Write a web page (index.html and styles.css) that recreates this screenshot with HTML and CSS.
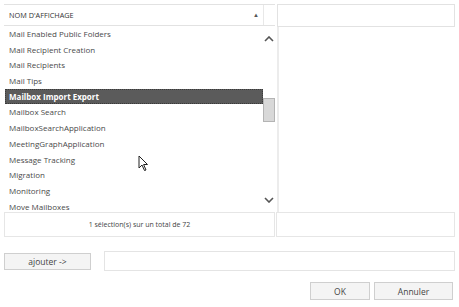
FILE: index.html
```html
<!DOCTYPE html>
<html lang="fr">
<head>
    <meta charset="UTF-8">
    <title>Sélectionner un rôle</title>
    <link rel="stylesheet" href="styles.css">
</head>
<body>
    <div class="dialog">
        <!-- listes -->
        <div class="lists">
            <div class="panel">
                <div class="head">
                    <span class="label">NOM D'AFFICHAGE</span>
                    <span class="sort">▲</span>
                    <span class="gutter"></span>
                </div>
                <div class="body">
                    <ul class="rows">
                        <li>Mail Enabled Public Folders</li>
                        <li>Mail Recipient Creation</li>
                        <li>Mail Recipients</li>
                        <li>Mail Tips</li>
                        <li class="selected">Mailbox Import Export</li>
                        <li>Mailbox Search</li>
                        <li>MailboxSearchApplication</li>
                        <li>MeetingGraphApplication</li>
                        <li>Message Tracking</li>
                        <li>Migration</li>
                        <li>Monitoring</li>
                        <li>Move Mailboxes</li>
                    </ul>
                    <div class="scrollbar">
                        <svg class="chev" width="10" height="6" viewBox="0 0 10 6"><path d="M1 5 L5 1 L9 5" fill="none" stroke="#555" stroke-width="1.6"/></svg>
                        <div class="track"><div class="thumb"></div></div>
                        <svg class="chev" width="10" height="6" viewBox="0 0 10 6"><path d="M1 1 L5 5 L9 1" fill="none" stroke="#555" stroke-width="1.6"/></svg>
                    </div>
                </div>
                <div class="foot">1 sélection(s) sur un total de 72</div>
            </div>
            <div class="panel side">
                <div class="head"></div>
                <div class="body"></div>
                <div class="foot"></div>
            </div>
        </div>

        <div class="add-row">
            <button class="btn add">ajouter -&gt;</button>
            <div class="field"></div>
        </div>

        <div class="actions">
            <button class="btn ok">OK</button>
            <button class="btn cancel">Annuler</button>
        </div>

        <!-- curseur -->
        <svg class="cursor" width="11" height="17" viewBox="0 0 11 17"><path d="M1 1 L1 13 L4 10 L6.5 15.5 L8 15 L5.6 9.5 L9.5 9.5 Z" fill="#fff" stroke="#222" stroke-width="1"/></svg>
    </div>
</body>
</html>
```

FILE: styles.css
```css
* {
    margin: 0;
    padding: 0;
    box-sizing: border-box;
}

body {
    font-family: "Open Sans", "Noto Sans", sans-serif;
    background: #fff;
    color: #444;
    width: 459px;
    height: 307px;
    overflow: hidden;
}

.dialog {
    position: relative;
    padding: 4px 4px 0 4px;
}

.lists {
    display: grid;
    grid-template-columns: 271px 1fr;
    gap: 1px;
}

.panel {
    display: flex;
    flex-direction: column;
}

.head {
    height: 22px;
    border-top: 1px solid #e2e2e2;
    border-bottom: 1px solid #e2e2e2;
    display: flex;
    align-items: stretch;
    padding: 0 0 0 5px;
    font-size: 7.3px;
    color: #333;
}

.head .label {
    flex: 1;
    display: flex;
    align-items: center;
}

.head .sort {
    display: flex;
    align-items: center;
    font-size: 6px;
    color: #555;
    margin-right: 4px;
}

.head .gutter {
    width: 12px;
    border-left: 1px solid #e8e8e8;
}

.body {
    height: 186px;
    display: flex;
    overflow: hidden;
}

.rows {
    list-style: none;
    flex: 1;
    padding-left: 1px;
}

.rows li {
    height: 15.7px;
    line-height: 15.7px;
    padding-left: 4px;
    font-size: 8px;
    color: #4a4a4a;
    white-space: nowrap;
}

.rows li.selected {
    background: #5b5b5b;
    color: #fff;
    font-weight: bold;
    outline: 1px dotted #3a3a3a;
    outline-offset: -1px;
}

.scrollbar {
    width: 12px;
    display: flex;
    flex-direction: column;
    align-items: center;
    padding: 10px 0 9px;
}

.chev {
    flex: none;
}

.track {
    flex: 1;
    width: 12px;
    padding-top: 56px;
}

.thumb {
    width: 12px;
    height: 24px;
    background: #d8d8d8;
    border: 1px solid #b4b4b4;
}

.foot {
    height: 25px;
    border: 1px solid #e6e6e6;
    display: flex;
    align-items: center;
    justify-content: center;
    font-size: 7px;
    color: #444;
}

.side .head {
    height: 23px;
    border: 1px solid #e2e2e2;
    margin-left: 1px;
}

.side .body {
    border-left: 2px solid #ececec;
    margin-left: 1px;
    height: 185px;
}

.add-row {
    display: flex;
    align-items: center;
    gap: 13px;
    margin-top: 14px;
}

.btn {
    font-family: inherit;
    font-size: 8.5px;
    color: #444;
    background: #f4f4f4;
    border: 1px solid #cfcfcf;
    cursor: pointer;
}

.add {
    width: 87px;
    height: 17px;
}

.field {
    flex: 1;
    height: 20px;
    border: 1px solid #e4e4e4;
}

.actions {
    display: flex;
    justify-content: flex-end;
    gap: 4px;
    margin-top: 11px;
    padding-right: 2px;
}

.ok {
    width: 60px;
    height: 18px;
}

.cancel {
    width: 79px;
    height: 18px;
}

.cursor {
    position: absolute;
    left: 138px;
    top: 155px;
}
```
